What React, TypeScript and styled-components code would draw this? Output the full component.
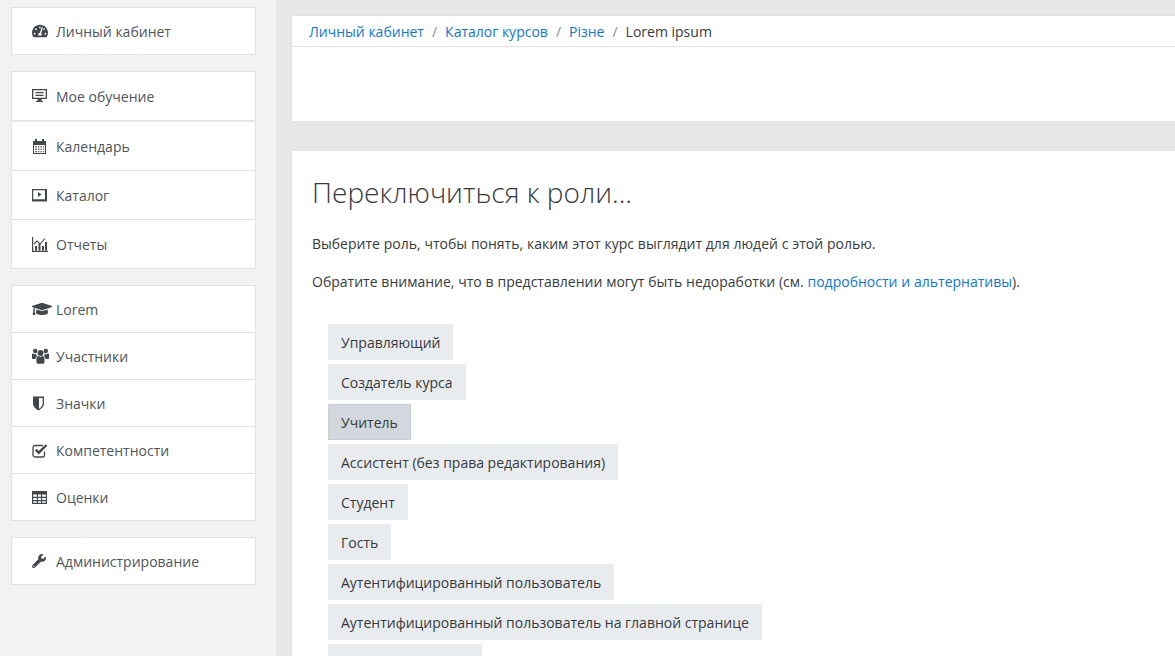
import React from "react";
import styled, { createGlobalStyle } from "styled-components";
import { FaTachometerAlt, FaGraduationCap, FaWrench } from "react-icons/fa";

const Global = createGlobalStyle`
  html, body { margin: 0; height: 656px; overflow: hidden; background: #e7e7e7; }
  body { font-family: "Open Sans", "Noto Sans", sans-serif; font-size: 14px; color: #373a3c; }
`;
const Page = styled.div`display: flex; height: 656px; overflow: hidden;`;
const Sidebar = styled.aside`
  width: 276px; flex: none; box-sizing: border-box; background: #f2f2f2;
  padding: 7px 20px 0 11px; display: flex; flex-direction: column; gap: 16px;
`;
const Group = styled.nav`background: #fff; border: 1px solid #e1e1e1; display: flex; flex-direction: column;`;
const Item = styled.a<{ $h: number; $thick?: boolean }>`
  height: ${p => p.$h}px; display: flex; align-items: center; padding-left: 20px; gap: 8px;
  color: #4f5559; box-sizing: border-box;
  border-bottom: ${p => (p.$thick ? "2px solid #e4e4e4" : "1px solid #e1e1e1")};
  &:last-child { border-bottom: 0; }
`;
const IconBox = styled.span`width: 16px; height: 16px; display: flex; align-items: center; justify-content: flex-start; color: #42474c; flex: none;
  svg { flex: none; }`;
const Main = styled.main`flex: 1; min-width: 0; padding: 15px 0 0 15px; display: flex; flex-direction: column; gap: 28px;`;
const Header = styled.section`height: 107px; flex: none; background: #fff; border: 1px solid #e1e1e1; border-right: 0; box-sizing: border-box;`;
const Crumbs = styled.ol`
  margin: 0; height: 31px; box-sizing: border-box; padding: 0 0 0 17px; list-style: none; display: flex; align-items: center;
  border-bottom: 1px solid #dee2e6;
`;
const Crumb = styled.li`
  color: #1177d1;
  & + &::before { content: "/"; color: #868e96; padding: 0 8px; }
`;
const Current = styled(Crumb)`color: #373a3c;`;
const Content = styled.section`flex: 1; min-height: 600px; background: #fff; border: 1px solid #e1e1e1; border-right: 0; padding: 20px 20px 0 20px;`;
const Title = styled.h2`font-size: 28px; font-weight: 300; margin: 0; line-height: 42px; color: #373a3c;`;
const Para = styled.p`margin: 0; line-height: 21px; word-spacing: 0.2px; &:nth-of-type(1) { margin-top: 20px; } &:nth-of-type(2) { margin-top: 17px; }`;
const Link = styled.a`color: #1177d1;`;
const Roles = styled.div`display: flex; flex-direction: column; align-items: flex-start; gap: 4px; margin: 32px 0 0 16px;`;
const Role = styled.button<{ $active?: boolean; $width?: number }>`
  height: 36px; font: inherit; color: #373a3c; border: 0; padding: 0 13px; margin: 0; flex: none;
  background: ${p => (p.$active ? "#d3d7de" : "#e9ecef")};
  ${p => p.$width && `width: ${p.$width}px;`}
  ${p => p.$active && "box-shadow: inset 0 0 0 1px #c9ced6;"}
`;

const Monitor = () => (<svg width="15" height="14" viewBox="0 0 15 14"><path fill="currentColor" fillRule="evenodd" d="M0 0h15v10H9.500v2H11v1H4v-1h1.500v-2H0zM1.300 1.300v7.400h12.400V1.300z"/><path fill="currentColor" d="M3.500 3h8v1.300h-8zM3.500 5.700h8V7h-8z"/></svg>);
const Calendar = () => (<svg width="15" height="15" viewBox="0 0 15 15"><path fill="currentColor" fillRule="evenodd" d="M1 2h13v13H1zM2 6v8h11V6z"/><path fill="currentColor" d="M3 0h2v3.500H3zM10 0h2v3.500h-2z"/><path fill="currentColor" opacity="0.75" d="M3 7h2v1.500H3zM6 7h1.500v1.500H6zM8.500 7H10v1.500H8.500zM11 7h1.200v1.500H11zM3 9.500h2V11H3zM6 9.500h1.500V11H6zM8.500 9.500H10V11H8.500zM11 9.500h1.200V11H11zM3 12h2v1.200H3zM6 12h1.500v1.200H6zM8.500 12H10v1.200H8.500zM11 12h1.200v1.200H11z"/></svg>);
const Book = () => (<svg width="15" height="14" viewBox="0 0 15 14"><path fill="currentColor" fillRule="evenodd" d="M0 1h15v12.500H0zM1.200 2.200v9h11.800v-9z"/><path fill="currentColor" d="M6 4l3.500 2.500L6 9z"/></svg>);
const Chart = () => (<svg width="16" height="15" viewBox="0 0 16 15"><path fill="currentColor" d="M0 0h1.200v13.800H16V15H0z"/><path fill="currentColor" d="M3 9h2v4.500H3zM6.500 7h2v6.500h-2zM10 9h2v4.500h-2zM13 5h2v8.500h-2z"/><path fill="none" stroke="currentColor" strokeWidth="1.100" d="M2 7l3-3 3 3 5-5.500"/></svg>);
const Users = () => (<svg width="17" height="16" viewBox="0 0 17 16"><g fill="currentColor"><circle cx="8.500" cy="5" r="3"/><circle cx="3.200" cy="3" r="2.200"/><circle cx="13.800" cy="3" r="2.200"/><path d="M4.500 10.500c0-1.500 1-2.500 2-2.500 .6.500 1.200.7 2 .7s1.400-.2 2-.7c1 0 2 1 2 2.500V14c0 1-.7 1.800-1.700 1.800H6.200c-1 0-1.700-.8-1.700-1.800z"/><path d="M0 6.500C0 5.800.4 5.600 1 5.500c.6.500 1.300.7 2.200.7h.9c.2.800.6 1.400 1.200 1.900-1 .6-1.800 1.500-1.800 3H1c-.6 0-1-.4-1-1zM17 6.500c0-.7-.4-.9-1-1-.6.500-1.300.7-2.200.7h-.9c-.2.800-.6 1.400-1.200 1.900 1 .6 1.800 1.500 1.800 3H16c.6 0 1-.4 1-1z"/></g></svg>);
const Shield = () => (<svg width="13" height="15" viewBox="0 0 13 15"><path fill="currentColor" fillRule="evenodd" d="M1 .500h11v7c0 3.200-3 5.700-5.500 7C4 13.200 1 10.700 1 7.500zM7 2v10.800C8.800 11.600 10.700 9.700 10.700 7.500V2z"/></svg>);
const Check = () => (<svg width="16" height="15" viewBox="0 0 16 15"><path fill="none" stroke="currentColor" strokeWidth="1.300" d="M12.500 8.500V12a2 2 0 0 1-2 2H3a2 2 0 0 1-2-2V4.500a2 2 0 0 1 2-2h8"/><path fill="none" stroke="currentColor" strokeWidth="2.400" d="M3.800 6.700l3 3L14.500 2"/></svg>);
const Grid = () => (<svg width="15" height="13" viewBox="0 0 15 13"><path fill="currentColor" fillRule="evenodd" d="M0 0h15v13H0zM1.200 3.500v2.300h3.700V3.500zM6 3.500v2.300h3V3.500zM10.100 3.500v2.300h3.700V3.500zM1.200 6.900v2.200h3.700V6.900zM6 6.900v2.200h3V6.900zM10.100 6.900v2.200h3.700V6.900zM1.200 10.200v1.600h3.700v-1.600zM6 10.200v1.600h3v-1.600zM10.100 10.200v1.600h3.700v-1.600z"/></svg>);

export default function App() {
  return (
    <Page>
      <Global />
      <Sidebar>
        <Group>
          <Item $h={46}><IconBox><FaTachometerAlt size={16} /></IconBox>Личный кабинет</Item>
        </Group>
        <Group>
          <Item $h={50} $thick><IconBox><Monitor /></IconBox>Мое обучение</Item>
          <Item $h={49}><IconBox><Calendar /></IconBox>Календарь</Item>
          <Item $h={49}><IconBox><Book /></IconBox>Каталог</Item>
          <Item $h={48}><IconBox><Chart /></IconBox>Отчеты</Item>
        </Group>
        <Group>
          <Item $h={47}><IconBox><FaGraduationCap size={20} /></IconBox>Lorem</Item>
          <Item $h={47}><IconBox><Users /></IconBox>Участники</Item>
          <Item $h={47}><IconBox><Shield /></IconBox>Значки</Item>
          <Item $h={47}><IconBox><Check /></IconBox>Компетентности</Item>
          <Item $h={46}><IconBox><Grid /></IconBox>Оценки</Item>
        </Group>
        <Group>
          <Item $h={46}><IconBox><FaWrench size={14} /></IconBox>Администрирование</Item>
        </Group>
      </Sidebar>
      <Main>
        <Header>
          <Crumbs>
            <Crumb>Личный кабинет</Crumb>
            <Crumb>Каталог курсов</Crumb>
            <Crumb>Різне</Crumb>
            <Current>Lorem ipsum</Current>
          </Crumbs>
        </Header>
        <Content>
          <Title>Переключиться к роли...</Title>
          <Para>Выберите роль, чтобы понять, каким этот курс выглядит для людей с этой ролью.</Para>
          <Para>Обратите внимание, что в представлении могут быть недоработки (см. <Link>подробности и альтернативы</Link>).</Para>
          <Roles>
            <Role>Управляющий</Role>
            <Role>Создатель курса</Role>
            <Role $active>Учитель</Role>
            <Role>Ассистент (без права редактирования)</Role>
            <Role>Студент</Role>
            <Role>Гость</Role>
            <Role>Аутентифицированный пользователь</Role>
            <Role>Аутентифицированный пользователь на главной странице</Role>
            <Role $width={154} />
          </Roles>
        </Content>
      </Main>
    </Page>
  );
}
